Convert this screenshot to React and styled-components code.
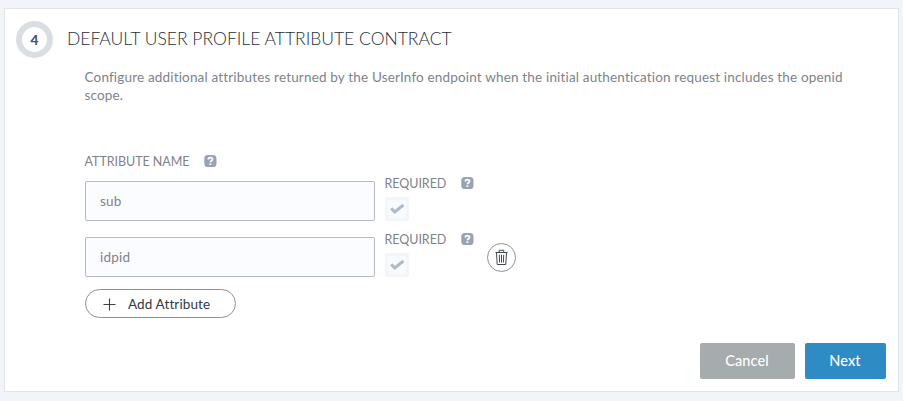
import React from "react";
import styled, { createGlobalStyle, css } from "styled-components";

const GlobalStyle = createGlobalStyle`
  * { box-sizing: border-box; }
  body {
    margin: 0;
    background: #f1f5f9;
    font-family: Lato, "Open Sans", sans-serif;
    font-weight: 400;
    color: #7e838a;
  }
  button { font: inherit; margin: 0; padding: 0; }
`;

const Page = styled.main`
  height: 401px;
  padding: 8px 4px 9px;
  overflow: hidden;
`;

const Card = styled.section`
  display: flex;
  flex-direction: column;
  width: 895px;
  height: 384px;
  background: #fff;
  border: 1px solid #e1e5e9;
`;

const Header = styled.header`
  display: flex;
  align-items: center;
  gap: 14px;
  margin: 12px 0 0 11px;
  height: 37px;
`;

const StepBadge = styled.span`
  display: flex;
  align-items: center;
  justify-content: center;
  width: 37px;
  height: 37px;
  border: 6px solid #d9dee3;
  border-radius: 50%;
  color: #3f5375;
  font-size: 13.5px;
  font-weight: 900;
`;

const Title = styled.h1`
  margin: -2px 0 0;
  color: #252d38;
  font-size: 17.5px;
  font-weight: 300;
  line-height: 22px;
  white-space: nowrap;
`;

const Description = styled.p`
  width: 772px;
  margin: 10px 0 0 79.5px;
  font-size: 13.5px;
  line-height: 18px;
  letter-spacing: 0.17px;
`;

const Form = styled.div`
  display: flex;
  flex-direction: column;
  margin: 49px 0 0 80px;
`;

const Label = styled.div`
  display: flex;
  align-items: center;
  gap: ${(p) => p.$gap}px;
  height: 16px;
  font-size: 12.5px;
  line-height: 16px;
  white-space: nowrap;
`;

const LabelText = styled.span`
  width: ${(p) => p.$width}px;
  height: 16px;
  margin: 1px 0 -1px -0.5px;
  letter-spacing: -0.04px;
`;

const Row = styled.div`
  display: flex;
  align-items: flex-end;
  height: ${(p) => (p.$first ? 52 : 56)}px;
`;

const Field = styled.div`
  display: flex;
  align-items: center;
  width: 290px;
  height: 40px;
  padding: 0 14px;
  border: 1px solid #b4b9c2;
  border-radius: 2px;
  background: #fbfcff;
  font-size: 13.5px;
  letter-spacing: 0.25px;
`;

const Required = styled.div`
  display: flex;
  flex-direction: column;
  justify-content: space-between;
  width: 112px;
  height: 46px;
  padding-left: 10px;
`;

const Checkbox = styled.span`
  display: flex;
  align-items: center;
  justify-content: center;
  width: 24px;
  height: 24px;
  border: 3px solid #f3f5f6;
  border-radius: 2px;
  background: #f7fbff;
`;

const outlined = css`
  display: flex;
  align-items: center;
  height: 29px;
  border: 1px solid #8c919a;
  background: #fff;
  color: #303945;
`;

const DeleteButton = styled.button`
  ${outlined}
  justify-content: center;
  width: 29px;
  margin-bottom: 5px;
  border-radius: 50%;
`;

const AddButton = styled.button`
  ${outlined}
  width: 151px;
  margin-top: 12px;
  padding: 1px 0 0 17px;
  gap: 12px;
  border-radius: 15px;
  font-size: 13.5px;
  letter-spacing: 0.12px;
  white-space: nowrap;
`;

const Footer = styled.footer`
  display: flex;
  justify-content: flex-end;
  gap: 10px;
  margin: auto 12px 12px 0;
`;

const Action = styled.button`
  width: ${(p) => (p.$primary ? 81 : 95)}px;
  height: 36px;
  padding: 0 1px 1px 0;
  border: 0;
  border-radius: 2px;
  background: ${(p) => (p.$primary ? "#2e8bc3" : "#a6abae")};
  color: #fff;
  font-size: 14.5px;
  font-weight: 500;
  letter-spacing: 0.1px;
`;

const HelpIcon = () => (
  <svg width="13" height="13" viewBox="0 0 13 13" fill="none">
    <rect x="0.3" y="0" width="12.2" height="12" rx="3.6" fill="#98a3b3" />
    <path d="M4.3 4.5C4.4 1.9 8.5 1.9 8.5 4.4C8.5 5.8 6.4 5.8 6.4 7.3" stroke="#fff" strokeWidth="1.7" />
    <path d="M5.5 8.3h1.8v1.7H5.5z" fill="#fff" />
  </svg>
);

const CheckIcon = () => (
  <svg width="16" height="12" viewBox="0 0 16 12" fill="none">
    <path d="M2.2 5.4L5.8 8.9L14.4 2" stroke="#b0bac6" strokeWidth="3" />
  </svg>
);

const TrashIcon = () => (
  <svg width="13" height="17" viewBox="0 0 13 17" fill="none" stroke="#424950" strokeWidth="1">
    <path d="M0.5 3.5H12.5M4.2 3.2V1.3H8.8V3.2M1.5 3.8L2.2 15.5H10.8L11.5 3.8M4.3 5.8L4.6 13.5M6.5 5.8V13.5M8.7 5.8L8.4 13.5" />
  </svg>
);

const PlusIcon = () => (
  <svg width="13" height="13" viewBox="0 0 13 13" stroke="#39424d" strokeWidth="1.1">
    <path d="M6.5 0.5V12.5M0.5 6.5H12.5" />
  </svg>
);

const attributes = [
  { name: "sub", removable: false },
  { name: "idpid", removable: true },
];

export default function App() {
  return (
    <>
      <GlobalStyle />
      <Page>
        <Card>
          <Header>
            <StepBadge>4</StepBadge>
            <Title>DEFAULT USER PROFILE ATTRIBUTE CONTRACT</Title>
          </Header>
          <Description>
            Configure additional attributes returned by the UserInfo endpoint when the initial
            authentication request includes the openid scope.
          </Description>
          <Form>
            <Label $gap={15}>
              <LabelText $width={104.5}>ATTRIBUTE NAME</LabelText>
              <HelpIcon />
            </Label>
            {attributes.map((a, i) => (
              <Row key={a.name} $first={i === 0}>
                <Field>{a.name}</Field>
                <Required>
                  <Label $gap={14}>
                    <LabelText $width={62.5}>REQUIRED</LabelText>
                    <HelpIcon />
                  </Label>
                  <Checkbox>
                    <CheckIcon />
                  </Checkbox>
                </Required>
                {a.removable && (
                  <DeleteButton aria-label="Delete">
                    <TrashIcon />
                  </DeleteButton>
                )}
              </Row>
            ))}
            <AddButton>
              <PlusIcon />
              <span>Add Attribute</span>
            </AddButton>
          </Form>
          <Footer>
            <Action>Cancel</Action>
            <Action $primary>Next</Action>
          </Footer>
        </Card>
      </Page>
    </>
  );
}
